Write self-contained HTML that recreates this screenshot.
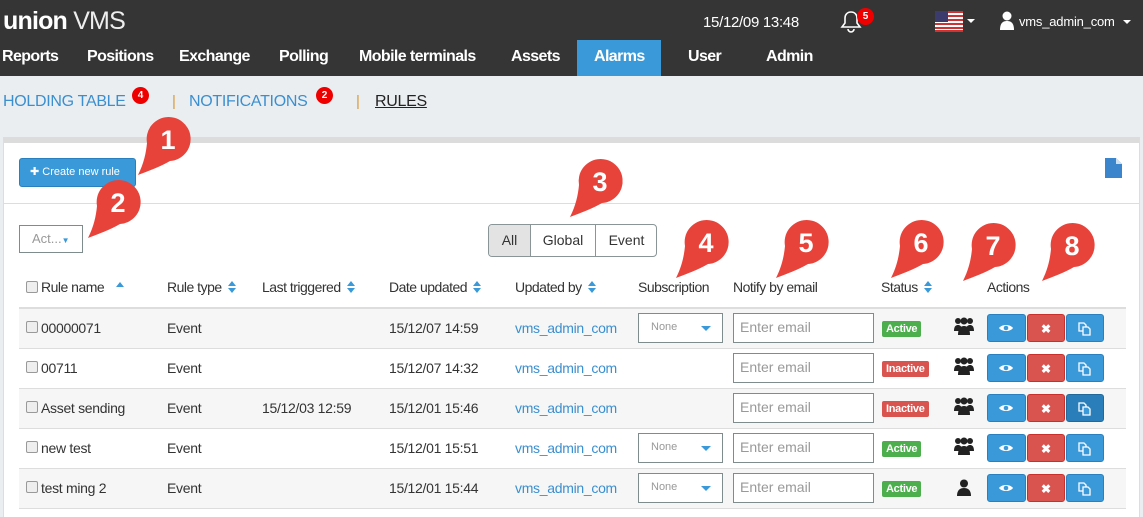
<!DOCTYPE html>
<html><head><meta charset="utf-8"><style>
*{margin:0;padding:0;box-sizing:border-box}
body{width:1143px;height:512px;overflow:hidden;background:#ebeef0;font-family:"Liberation Sans",sans-serif;color:#333;position:relative}
.a{position:absolute;white-space:nowrap}
#top{left:0;top:0;width:1143px;height:76px;background:#353535}
.nav{top:48px;font-size:16px;font-weight:bold;color:#fff;letter-spacing:-0.6px}
.sub{top:93px;font-size:16px;color:#3a8fd0;letter-spacing:-0.3px}
.badge{background:#e00;color:#fff;font-size:10px;font-weight:bold;border-radius:50%;width:17px;height:17px;text-align:center;line-height:17px}
#panel{left:3px;top:137px;width:1137px;height:380px;background:#fff;border-top:6px solid #dcdcdc;border-left:1px solid #ddd;border-right:1px solid #ddd}
.th{top:279px;font-size:14px;color:#333;letter-spacing:-0.5px}
.row{left:19px;width:1107px;height:40px;border-top:1px solid #ddd}
.td{font-size:14px;letter-spacing:-0.3px}
.cb{width:12px;height:12px;border:1px solid #999;border-radius:2px;background:#eee}
.sel{width:85px;height:30px;border:1px solid #7f8c8d;font-size:11px;color:#999;padding:7px 12px}
.sel:after{content:"";position:absolute;right:11px;top:12px;border-left:5px solid transparent;border-right:5px solid transparent;border-top:5px solid #3a99d8}
.em{width:141px;height:30px;border:1px solid #7f8c8d;font-size:14px;color:#999;padding:5px 6px}
.lbl{font-size:11px;font-weight:bold;color:#fff;height:16px;line-height:16px;padding:0 4px;border-radius:2px;letter-spacing:-0.3px}
.btn{width:39px;height:28px;border-radius:3px;color:#fff;text-align:center;line-height:28px;font-size:12px;font-weight:bold}
.sort{display:inline-block;width:8px;height:12px;vertical-align:-1px;margin-left:3px}
</style></head><body>
<svg width="0" height="0" style="position:absolute"><defs>
<g id="ud" fill="#3a99d8"><path d="M0 5L4 0L8 5z M0 7h8L4 12z"/></g>
<g id="grp" fill="#222"><circle cx="4" cy="4" r="3"/><circle cx="16" cy="4" r="3"/><circle cx="10" cy="4" r="3.5"/><path d="M0 14c0-5 2-6 4-6s4 1 4 6z M12 14c0-5 2-6 4-6s4 1 4 6z"/><path d="M4 18c0-7 3-9 6-9s6 2 6 9z"/></g>
<g id="eye"><path d="M-7 0c3-4 11-4 14 0c-3 4-11 4-14 0z" fill="#fff"/><circle r="2.3" fill="#3a99d8"/></g>
<g id="cp" fill="none" stroke="#fff" stroke-width="1.3"><path d="M-5 -5h5l2 2v6h-7z"/><path d="M-1 -1h5l2 2v6h-7z" fill="#3a99d8"/></g>
</defs></svg>
<div class="a" id="top"></div>
<div class="a" style="left:3px;top:7px;font-size:25px;color:#fff;letter-spacing:-0.8px"><b>union</b> <span style="color:#eee">VMS</span></div>
<div class="a" style="left:703px;top:14px;font-size:15px;color:#fff;letter-spacing:-0.3px">15/12/09 13:48</div>
<svg class="a" style="left:839px;top:9px" width="24" height="24" viewBox="0 0 24 24"><path d="M12 3c-4 0-6 3-6 6v5l-3 4h18l-3-4V9c0-3-2-6-6-6z M9 20a3 3 0 0 0 6 0" fill="none" stroke="#fff" stroke-width="1.6"/></svg>
<div class="a badge" style="left:857px;top:8px">5</div>
<svg class="a" style="left:935px;top:11px" width="28" height="21"><rect width="28" height="21" fill="#fff"/><g fill="#c33"><rect y="0" width="28" height="2"/><rect y="4" width="28" height="2"/><rect y="8" width="28" height="2"/><rect y="12" width="28" height="2"/><rect y="16" width="28" height="2"/><rect y="19" width="28" height="2"/></g><rect width="13" height="11" fill="#3c3b6e"/></svg>
<div class="a" style="left:967px;top:19px;border-left:4px solid transparent;border-right:4px solid transparent;border-top:4px solid #fff"></div>
<svg class="a" style="left:999px;top:11px" width="16" height="19"><circle cx="8" cy="5" r="4.5" fill="#fff"/><path d="M1 19c0-7 3-9 7-9s7 2 7 9z" fill="#fff"/></svg>
<div class="a" style="left:1019px;top:14px;font-size:13px;color:#fff;letter-spacing:-0.2px">vms_admin_com</div>
<div class="a" style="left:1123px;top:20px;border-left:4px solid transparent;border-right:4px solid transparent;border-top:4px solid #fff"></div>
<div class="a" style="left:577px;top:40px;width:84px;height:36px;background:#3a99d8"></div>
<div class="a nav" style="left:2px">Reports</div>
<div class="a nav" style="left:87px">Positions</div>
<div class="a nav" style="left:179px">Exchange</div>
<div class="a nav" style="left:279px">Polling</div>
<div class="a nav" style="left:359px">Mobile terminals</div>
<div class="a nav" style="left:511px">Assets</div>
<div class="a nav" style="left:594px">Alarms</div>
<div class="a nav" style="left:688px">User</div>
<div class="a nav" style="left:766px">Admin</div>
<div class="a sub" style="left:3px">HOLDING TABLE</div>
<div class="a badge" style="left:132px;top:87px">4</div>
<div class="a" style="left:172px;top:93px;color:#d89b3b;font-size:15px">|</div>
<div class="a sub" style="left:189px">NOTIFICATIONS</div>
<div class="a badge" style="left:316px;top:87px">2</div>
<div class="a" style="left:356px;top:93px;color:#d89b3b;font-size:15px">|</div>
<div class="a sub" style="left:375px;color:#222;text-decoration:underline">RULES</div>
<div class="a" id="panel"></div>
<div class="a" style="left:19px;top:158px;width:117px;height:29px;background:#3a99d8;border:1px solid #2a80be;border-radius:3px;color:#fff;font-size:11px;line-height:27px;padding-left:10px">✚ Create new rule</div>
<svg class="a" style="left:1105px;top:158px" width="18" height="20"><path d="M0 0h11l6 6v14H0z" fill="#3a85cc"/><path d="M11 0v6h6" fill="#cfe0f2"/></svg>
<div class="a" style="left:4px;top:203px;width:1135px;height:1px;background:#ddd"></div>
<div class="a" style="left:19px;top:225px;width:64px;height:28px;border:1px solid #7f8c8d;font-size:13px;color:#999;padding:5px 12px">Act...<span style="color:#3a99d8;font-size:8px">▼</span></div>
<div class="a" style="left:488px;top:224px;width:169px;height:33px;border:1px solid #8a9596;border-radius:4px;overflow:hidden;font-size:14px">
<div class="a" style="left:0;top:0;width:42px;height:31px;background:#e3e3e3;border-right:1px solid #8a9596;text-align:center;line-height:31px">All</div>
<div class="a" style="left:42px;top:0;width:65px;height:31px;border-right:1px solid #8a9596;text-align:center;line-height:31px">Global</div>
<div class="a" style="left:107px;top:0;width:61px;height:31px;text-align:center;line-height:31px">Event</div></div>
<div class="a cb" style="left:26px;top:281px"></div>
<div class="a th" style="left:41px">Rule name <svg class="sort" style="margin-left:8px"><path d="M0 6L4 1L8 6z" fill="#3a99d8"/></svg></div>
<div class="a th" style="left:167px">Rule type <svg class="sort"><use href="#ud"/></svg></div>
<div class="a th" style="left:262px">Last triggered <svg class="sort"><use href="#ud"/></svg></div>
<div class="a th" style="left:389px">Date updated <svg class="sort"><use href="#ud"/></svg></div>
<div class="a th" style="left:515px">Updated by <svg class="sort"><use href="#ud"/></svg></div>
<div class="a th" style="left:638px">Subscription</div>
<div class="a th" style="left:733px">Notify by email</div>
<div class="a th" style="left:881px">Status <svg class="sort"><use href="#ud"/></svg></div>
<div class="a th" style="left:987px">Actions</div>
<div class="a" style="left:19px;top:307px;width:1107px;height:2px;background:#ddd"></div>

<div class="a row" style="top:308px;background:#f6f6f6"></div>
<div class="a row" style="top:348px"></div>
<div class="a row" style="top:388px;background:#f6f6f6"></div>
<div class="a row" style="top:428px"></div>
<div class="a row" style="top:468px;background:#f6f6f6"></div>
<div class="a" style="left:19px;top:508px;width:1107px;height:1px;background:#ddd"></div>

<div class="a cb" style="left:26px;top:321px"></div><div class="a td" style="left:41px;top:320px">00000071</div>
<div class="a cb" style="left:26px;top:361px"></div><div class="a td" style="left:41px;top:360px">00711</div>
<div class="a cb" style="left:26px;top:401px"></div><div class="a td" style="left:41px;top:400px">Asset sending</div>
<div class="a cb" style="left:26px;top:441px"></div><div class="a td" style="left:41px;top:440px">new test</div>
<div class="a cb" style="left:26px;top:481px"></div><div class="a td" style="left:41px;top:480px">test ming 2</div>

<div class="a td" style="left:167px;top:320px">Event</div><div class="a td" style="left:167px;top:360px">Event</div><div class="a td" style="left:167px;top:400px">Event</div><div class="a td" style="left:167px;top:440px">Event</div><div class="a td" style="left:167px;top:480px">Event</div>
<div class="a td" style="left:262px;top:400px">15/12/03 12:59</div>
<div class="a td" style="left:389px;top:320px">15/12/07 14:59</div><div class="a td" style="left:389px;top:360px">15/12/07 14:32</div><div class="a td" style="left:389px;top:400px">15/12/01 15:46</div><div class="a td" style="left:389px;top:440px">15/12/01 15:51</div><div class="a td" style="left:389px;top:480px">15/12/01 15:44</div>
<div class="a td" style="left:515px;top:320px;color:#3a8fd0">vms_admin_com</div><div class="a td" style="left:515px;top:360px;color:#3a8fd0">vms_admin_com</div><div class="a td" style="left:515px;top:400px;color:#3a8fd0">vms_admin_com</div><div class="a td" style="left:515px;top:440px;color:#3a8fd0">vms_admin_com</div><div class="a td" style="left:515px;top:480px;color:#3a8fd0">vms_admin_com</div>

<div class="a sel" style="left:638px;top:313px;background:#fff">None</div>
<div class="a sel" style="left:638px;top:433px;background:#fff">None</div>
<div class="a sel" style="left:638px;top:473px;background:#fff">None</div>

<div class="a em" style="left:733px;top:313px;background:#fff">Enter email</div>
<div class="a em" style="left:733px;top:353px;background:#fff">Enter email</div>
<div class="a em" style="left:733px;top:393px;background:#fff">Enter email</div>
<div class="a em" style="left:733px;top:433px;background:#fff">Enter email</div>
<div class="a em" style="left:733px;top:473px;background:#fff">Enter email</div>

<div class="a lbl" style="left:882px;top:321px;background:#4cae4c">Active</div>
<div class="a lbl" style="left:882px;top:361px;background:#d9534f">Inactive</div>
<div class="a lbl" style="left:882px;top:401px;background:#d9534f">Inactive</div>
<div class="a lbl" style="left:882px;top:441px;background:#4cae4c">Active</div>
<div class="a lbl" style="left:882px;top:481px;background:#4cae4c">Active</div>

<svg class="a" style="left:954px;top:317px" width="20" height="19"><use href="#grp"/></svg>
<svg class="a" style="left:954px;top:357px" width="20" height="19"><use href="#grp"/></svg>
<svg class="a" style="left:954px;top:397px" width="20" height="19"><use href="#grp"/></svg>
<svg class="a" style="left:954px;top:437px" width="20" height="19"><use href="#grp"/></svg>
<svg class="a" style="left:957px;top:479px" width="14" height="18"><circle cx="7" cy="4.5" r="4" fill="#222"/><path d="M0 17c0-6 3-8 7-8s7 2 7 8z" fill="#222"/></svg>

<div class="a" style="left:987px;top:314px">
<div class="a btn" style="left:0;top:0;background:#3a99d8;border:1px solid #2a80be"><svg width="37" height="26"><use href="#eye" x="18" y="13"/></svg></div>
<div class="a btn" style="left:40px;top:0;width:38px;background:#d9534f;border:1px solid #c9302c">✖</div>
<div class="a btn" style="left:79px;top:0;width:38px;background:#3a99d8;border:1px solid #2a80be"><svg width="36" height="26"><use href="#cp" x="17" y="13"/></svg></div></div>
<div class="a" style="left:987px;top:354px">
<div class="a btn" style="left:0;top:0;background:#3a99d8;border:1px solid #2a80be"><svg width="37" height="26"><use href="#eye" x="18" y="13"/></svg></div>
<div class="a btn" style="left:40px;top:0;width:38px;background:#d9534f;border:1px solid #c9302c">✖</div>
<div class="a btn" style="left:79px;top:0;width:38px;background:#3a99d8;border:1px solid #2a80be"><svg width="36" height="26"><use href="#cp" x="17" y="13"/></svg></div></div>
<div class="a" style="left:987px;top:394px">
<div class="a btn" style="left:0;top:0;background:#3a99d8;border:1px solid #2a80be"><svg width="37" height="26"><use href="#eye" x="18" y="13"/></svg></div>
<div class="a btn" style="left:40px;top:0;width:38px;background:#d9534f;border:1px solid #c9302c">✖</div>
<div class="a btn" style="left:79px;top:0;width:38px;background:#2a7fba;border:1px solid #21699b"><svg width="36" height="26"><use href="#cp" x="17" y="13"/></svg></div></div>
<div class="a" style="left:987px;top:434px">
<div class="a btn" style="left:0;top:0;background:#3a99d8;border:1px solid #2a80be"><svg width="37" height="26"><use href="#eye" x="18" y="13"/></svg></div>
<div class="a btn" style="left:40px;top:0;width:38px;background:#d9534f;border:1px solid #c9302c">✖</div>
<div class="a btn" style="left:79px;top:0;width:38px;background:#3a99d8;border:1px solid #2a80be"><svg width="36" height="26"><use href="#cp" x="17" y="13"/></svg></div></div>
<div class="a" style="left:987px;top:474px">
<div class="a btn" style="left:0;top:0;background:#3a99d8;border:1px solid #2a80be"><svg width="37" height="26"><use href="#eye" x="18" y="13"/></svg></div>
<div class="a btn" style="left:40px;top:0;width:38px;background:#d9534f;border:1px solid #c9302c">✖</div>
<div class="a btn" style="left:79px;top:0;width:38px;background:#3a99d8;border:1px solid #2a80be"><svg width="36" height="26"><use href="#cp" x="17" y="13"/></svg></div></div>

<svg class="a" style="left:0;top:0" width="1143" height="512">
<defs><g id="mk"><path d="M-30 36 C-24 24 -22 14 -21 4 A22 22 0 1 1 2 22 C-8 28 -20 32 -30 36Z" fill="#e8433a"/></g></defs>
<g font-family="Liberation Sans" font-weight="bold" font-size="27" fill="#fff" text-anchor="middle">
<use href="#mk" x="168" y="139"/><text x="168" y="149">1</text>
<use href="#mk" x="118" y="202"/><text x="118" y="212">2</text>
<use href="#mk" x="600" y="181"/><text x="600" y="191">3</text>
<use href="#mk" x="706" y="242"/><text x="706" y="252">4</text>
<use href="#mk" x="806" y="242"/><text x="806" y="252">5</text>
<use href="#mk" x="921" y="242"/><text x="921" y="252">6</text>
<use href="#mk" x="993" y="245"/><text x="993" y="255">7</text>
<use href="#mk" x="1072" y="245"/><text x="1072" y="255">8</text>
</g></svg>
</body></html>
